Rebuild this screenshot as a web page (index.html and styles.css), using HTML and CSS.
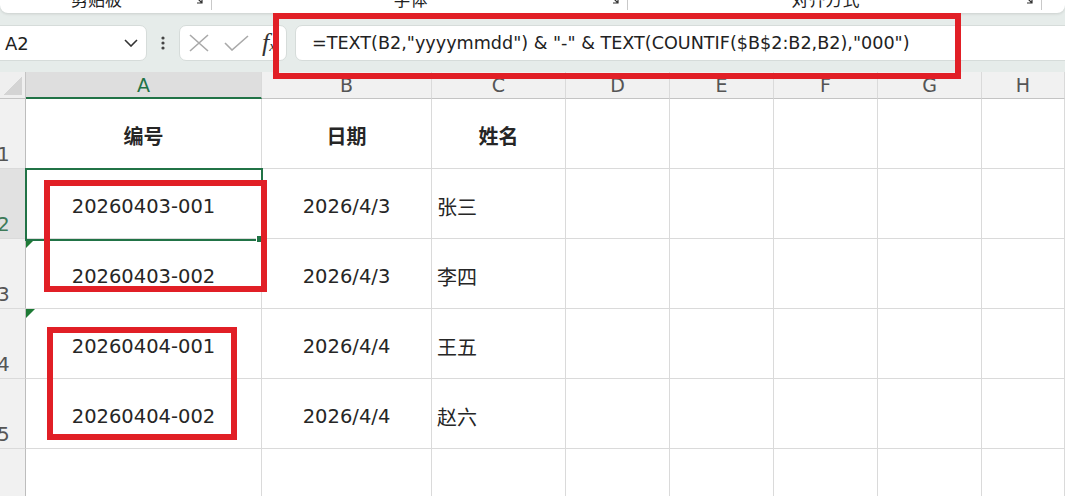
FILE: index.html
```html
<!DOCTYPE html>
<html lang="zh-CN">

<head>
    <meta charset="UTF-8">
    <meta name="viewport" content="width=device-width, initial-scale=1.0">
    <title>编号公式</title>
    <link rel="stylesheet" href="styles.css">
</head>

<body>
    <!-- faixa de grupos da fita (só a parte de baixo aparece) -->
    <div class="ribbon">
        <div class="group g1">
            <span class="group-name">剪贴板</span>
            <svg class="launcher" width="10" height="10" viewBox="0 0 10 10"><path d="M1 4V1h8v8H4M4 4l5 5M6 9h3V6" fill="none" stroke="#333" stroke-width="1.2"/></svg>
        </div>
        <div class="group g2">
            <span class="group-name">字体</span>
            <svg class="launcher" width="10" height="10" viewBox="0 0 10 10"><path d="M1 4V1h8v8H4M4 4l5 5M6 9h3V6" fill="none" stroke="#333" stroke-width="1.2"/></svg>
        </div>
        <div class="group g3">
            <span class="group-name">对齐方式</span>
            <svg class="launcher" width="10" height="10" viewBox="0 0 10 10"><path d="M1 4V1h8v8H4M4 4l5 5M6 9h3V6" fill="none" stroke="#333" stroke-width="1.2"/></svg>
        </div>
    </div>

    <div class="formula-bar">
        <div class="name-box">
            <span>A2</span>
            <svg width="14" height="8" viewBox="0 0 14 8"><path d="M1 1l6 6 6-6" fill="none" stroke="#333" stroke-width="1.6"/></svg>
        </div>
        <div class="dots">
            <svg width="4" height="14" viewBox="0 0 4 14"><circle cx="2" cy="2" r="1.6" fill="#444"/><circle cx="2" cy="7" r="1.6" fill="#444"/><circle cx="2" cy="12" r="1.6" fill="#444"/></svg>
        </div>
        <div class="fx-box">
            <svg width="20" height="18" viewBox="0 0 20 18"><path d="M1 1l18 16M19 1L1 17" stroke="#a9a9a9" stroke-width="1.6"/></svg>
            <svg width="25" height="16" viewBox="0 0 25 16"><path d="M1 8l7 7L24 1" fill="none" stroke="#a9a9a9" stroke-width="1.6"/></svg>
            <span class="fx">f<small>x</small></span>
        </div>
        <div class="formula-input">=TEXT(B2,"yyyymmdd") &amp; "-" &amp; TEXT(COUNTIF($B$2:B2,B2),"000")</div>
    </div>
    <div class="mark mark-formula"></div>

    <div class="sheet">
        <div class="corner"></div>
        <div class="ch sel">A</div>
        <div class="ch">B</div>
        <div class="ch">C</div>
        <div class="ch">D</div>
        <div class="ch">E</div>
        <div class="ch">F</div>
        <div class="ch">G</div>
        <div class="ch">H</div>

        <div class="rh">1</div>
        <div class="c ctr bold">编号</div>
        <div class="c ctr bold">日期</div>
        <div class="c ctr bold">姓名</div>
        <div class="c"></div><div class="c"></div><div class="c"></div><div class="c"></div><div class="c"></div>

        <div class="rh sel">2</div>
        <div class="c ctr">20260403-001</div>
        <div class="c ctr">2026/4/3</div>
        <div class="c left">张三</div>
        <div class="c"></div><div class="c"></div><div class="c"></div><div class="c"></div><div class="c"></div>

        <div class="rh">3</div>
        <div class="c ctr warn">20260403-002</div>
        <div class="c ctr">2026/4/3</div>
        <div class="c left">李四</div>
        <div class="c"></div><div class="c"></div><div class="c"></div><div class="c"></div><div class="c"></div>

        <div class="rh">4</div>
        <div class="c ctr warn">20260404-001</div>
        <div class="c ctr">2026/4/4</div>
        <div class="c left">王五</div>
        <div class="c"></div><div class="c"></div><div class="c"></div><div class="c"></div><div class="c"></div>

        <div class="rh">5</div>
        <div class="c ctr">20260404-002</div>
        <div class="c ctr">2026/4/4</div>
        <div class="c left">赵六</div>
        <div class="c"></div><div class="c"></div><div class="c"></div><div class="c"></div><div class="c"></div>

        <div class="rh"></div>
        <div class="c"></div><div class="c"></div><div class="c"></div><div class="c"></div>
        <div class="c"></div><div class="c"></div><div class="c"></div><div class="c"></div>

        <!-- célula ativa e marcações em vermelho -->
        <div class="selection"><span class="handle"></span></div>
        <div class="mark mark-a"></div>
        <div class="mark mark-b"></div>
    </div>
</body>

</html>
```

FILE: styles.css
```css
body {
    margin: 0;
    width: 1065px;
    height: 496px;
    overflow: hidden;
    position: relative;
    background-color: #e6ecea;
    font-family: "DejaVu Sans", "Noto Sans CJK SC", sans-serif;
    color: #1f1f1f;
}

/* fita */
.ribbon {
    display: flex;
    height: 13px;
    overflow: hidden;
    background-color: #fff;
    border-radius: 0 0 8px 8px;
    box-shadow: 0 1px 3px rgba(0, 0, 0, 0.12);
}

.group {
    display: flex;
    align-items: flex-end;
    height: 10px;
    border-right: 1px solid #c9c9c9;
}

.g1 {
    width: 211px;
}

.g2 {
    width: 415px;
}

.g3 {
    width: 413px;
}

.group-name {
    flex: 1;
    text-align: center;
    font-family: "Noto Sans CJK SC", sans-serif;
    font-size: 17px;
    line-height: 20px;
    margin-bottom: 1px;
    color: #222;
}

.launcher {
    margin: 0 8px 6px 0;
}

/* barra de fórmulas */
.formula-bar {
    display: flex;
    align-items: stretch;
    height: 36px;
    margin-top: 12px;
}

.name-box {
    display: flex;
    align-items: center;
    justify-content: space-between;
    width: 155px;
    margin-left: -8px;
    padding: 0 8px 0 12px;
    box-sizing: border-box;
    background-color: #fff;
    border: 1px solid #d6dcda;
    border-radius: 7px;
    font-size: 18px;
}

.dots {
    display: flex;
    align-items: center;
    justify-content: center;
    width: 32px;
}

.fx-box {
    display: flex;
    align-items: center;
    gap: 15px;
    width: 108px;
    padding-left: 9px;
    box-sizing: border-box;
    background-color: #fff;
    border: 1px solid #d6dcda;
    border-radius: 7px;
}

.fx {
    font-family: "Liberation Serif", serif;
    font-style: italic;
    font-size: 26px;
    line-height: 1;
    color: #333;
    margin-left: -2px;
}

.fx small {
    font-size: 15px;
}

.formula-input {
    flex: 1;
    display: flex;
    align-items: center;
    margin: 0 -10px 0 8px;
    padding-left: 16px;
    background-color: #fff;
    border: 1px solid #d6dcda;
    border-radius: 7px;
    font-size: 17.6px;
    color: #222;
    white-space: nowrap;
}

/* planilha */
.sheet {
    position: relative;
    display: grid;
    grid-template-columns: 26px 236px 170px 134px 104px 104px 104px 104px 83px;
    grid-template-rows: 27px repeat(6, 70px);
    margin-top: 11px;
    background-color: #fff;
}

.sheet > div {
    box-sizing: border-box;
}

.corner {
    position: relative;
    background-color: #efefef;
    border-right: 1px solid #c4c4c4;
    border-bottom: 1px solid #c4c4c4;
}

.corner::after {
    content: "";
    position: absolute;
    right: 3px;
    bottom: 3px;
    width: 19px;
    height: 19px;
    background: linear-gradient(to top left, #d4d4d4 50%, transparent 50%);
}

.ch {
    background-color: #f1f1f1;
    border-right: 1px solid #dadada;
    border-bottom: 1px solid #c4c4c4;
    text-align: center;
    font-size: 19px;
    line-height: 26px;
    color: #555;
}

.ch.sel {
    background-color: #dedede;
    border-bottom: 2px solid #217346;
    color: #217346;
}

.rh {
    display: flex;
    align-items: flex-end;
    background-color: #f1f1f1;
    border-right: 1px solid #bdbdbd;
    border-bottom: 1px solid #dadada;
    padding-bottom: 2px;
    text-indent: -3px;
    font-size: 20px;
    color: #555;
    overflow: hidden;
}

.rh.sel {
    background-color: #e1e1e1;
    color: #3e7a58;
}

.c {
    position: relative;
    display: flex;
    align-items: center;
    padding-top: 5px;
    border-right: 1px solid #dadada;
    border-bottom: 1px solid #dadada;
    font-size: 19.5px;
    color: #262626;
}

.ctr {
    justify-content: center;
}

.left {
    padding-left: 5px;
    font-family: "Noto Sans CJK SC", sans-serif;
    font-size: 20px;
}

.bold {
    font-weight: bold;
    font-family: "Noto Sans CJK SC", sans-serif;
    font-size: 20px;
    padding-top: 4px;
}

.warn::before {
    content: "";
    position: absolute;
    left: 0;
    top: 0;
    border-top: 9px solid #1d7a35;
    border-right: 9px solid transparent;
}

.selection {
    position: absolute;
    left: 25px;
    top: 96px;
    width: 238px;
    height: 73px;
    box-sizing: border-box;
    border: 2px solid #217346;
}

.handle {
    position: absolute;
    right: -3px;
    bottom: -4px;
    width: 6px;
    height: 6px;
    background-color: #217346;
    border: 1px solid #fff;
}

/* marcações em vermelho */
.mark {
    position: absolute;
    z-index: 2;
    box-sizing: border-box;
    border: 6px solid #e11f26;
}

.mark-formula {
    left: 273px;
    top: 13px;
    width: 688px;
    height: 66px;
}

.mark-a {
    left: 44px;
    top: 108px;
    width: 223px;
    height: 112px;
}

.mark-b {
    left: 47px;
    top: 255px;
    width: 190px;
    height: 113px;
}
```
